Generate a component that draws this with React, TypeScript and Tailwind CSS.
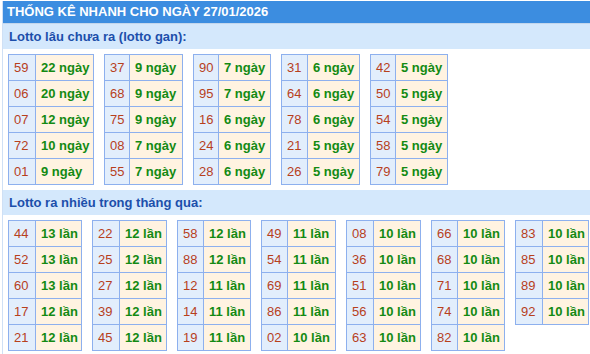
import React from 'react';

type Cell = [string, string];

interface Block {
  w: [number, number];
  rows: Cell[];
}

const GAN: Block[] = [
  { w: [27, 58], rows: [['59', '22 ngày'], ['06', '20 ngày'], ['07', '12 ngày'], ['72', '10 ngày'], ['01', '9 ngày']] },
  { w: [25, 53], rows: [['37', '9 ngày'], ['68', '9 ngày'], ['75', '9 ngày'], ['08', '7 ngày'], ['55', '7 ngày']] },
  { w: [25, 52], rows: [['90', '7 ngày'], ['95', '7 ngày'], ['16', '6 ngày'], ['24', '6 ngày'], ['28', '6 ngày']] },
  { w: [26, 52], rows: [['31', '6 ngày'], ['64', '6 ngày'], ['78', '6 ngày'], ['21', '5 ngày'], ['26', '5 ngày']] },
  { w: [25, 52], rows: [['42', '5 ngày'], ['50', '5 ngày'], ['54', '5 ngày'], ['58', '5 ngày'], ['79', '5 ngày']] },
];

const NHIEU: Block[] = [
  { w: [27, 46], rows: [['44', '13 lần'], ['52', '13 lần'], ['60', '13 lần'], ['17', '12 lần'], ['21', '12 lần']] },
  { w: [27, 47], rows: [['22', '12 lần'], ['25', '12 lần'], ['27', '12 lần'], ['39', '12 lần'], ['45', '12 lần']] },
  { w: [26, 47], rows: [['58', '12 lần'], ['88', '12 lần'], ['12', '11 lần'], ['14', '11 lần'], ['19', '11 lần']] },
  { w: [26, 48], rows: [['49', '11 lần'], ['54', '11 lần'], ['69', '11 lần'], ['86', '11 lần'], ['02', '10 lần']] },
  { w: [27, 47], rows: [['08', '10 lần'], ['36', '10 lần'], ['51', '10 lần'], ['56', '10 lần'], ['63', '10 lần']] },
  { w: [26, 47], rows: [['66', '10 lần'], ['68', '10 lần'], ['71', '10 lần'], ['74', '10 lần'], ['82', '10 lần']] },
  { w: [27, 46], rows: [['83', '10 lần'], ['85', '10 lần'], ['89', '10 lần'], ['92', '10 lần']] },
];

function StatTable({ block }: { block: Block }) {
  return (
    <div className="flex flex-col self-start border-l border-t border-[#8db0ee]">
      {block.rows.map(([num, val], i) => (
        <div key={i} className="flex h-[26px]">
          <div
            className="flex items-center border-r border-b border-[#8db0ee] bg-[#e2eefc] pl-[5px] text-[13px] text-[#b7401c]"
            style={{ width: block.w[0] }}
          >
            {num}
          </div>
          <div
            className="flex items-center border-r border-b border-[#8db0ee] bg-[#fff3e1] pl-[5px] text-[13px] font-bold text-[#138a13]"
            style={{ width: block.w[1] }}
          >
            {val}
          </div>
        </div>
      ))}
    </div>
  );
}

function SubHeader({ children }: { children: React.ReactNode }) {
  return (
    <div className="flex h-[25px] items-center bg-[#d4e8fc] pl-[6px] text-[13px] font-bold text-[#1c4fab]">
      {children}
    </div>
  );
}

export default function App() {
  return (
    <div
      className="h-[354px] w-[590px] overflow-hidden bg-white pl-[2px] pt-[1px]"
      style={{ fontFamily: '"Liberation Sans", Arial, sans-serif' }}
    >
      <div className="h-full border-l border-[#cfe0f5]">
        {/* Title */}
        <div className="flex h-[23px] items-center border-b border-[#c3d6ec] bg-[#3c8de0] pl-[4px] text-[13px] font-bold text-white">
          THỐNG KÊ NHANH CHO NGÀY 27/01/2026
        </div>

        <SubHeader>Lotto lâu chưa ra (lotto gan):</SubHeader>
        <div className="mt-[5px] flex gap-[10px] pl-[5px]">
          {GAN.map((b, i) => (
            <StatTable key={i} block={b} />
          ))}
        </div>

        <div className="mt-[5px]">
          <SubHeader>Lotto ra nhiều trong tháng qua:</SubHeader>
        </div>
        <div className="mt-[5px] flex gap-[10px] pl-[5px]">
          {NHIEU.map((b, i) => (
            <StatTable key={i} block={b} />
          ))}
        </div>
      </div>
    </div>
  );
}
